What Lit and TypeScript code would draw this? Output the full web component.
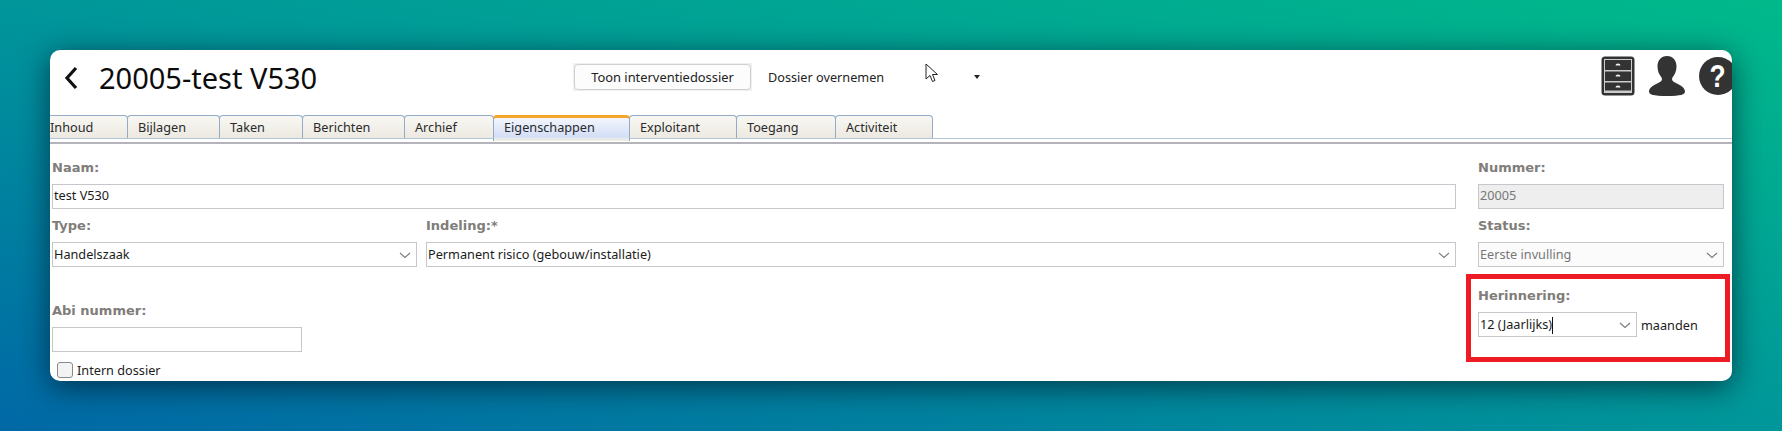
import { LitElement, html, css } from "lit";
import { customElement } from "lit/decorators.js";

const TABS = [
  { label: "Inhoud", width: 88, first: true },
  { label: "Bijlagen", width: 92 },
  { label: "Taken", width: 83 },
  { label: "Berichten", width: 102 },
  { label: "Archief", width: 89 },
  { label: "Eigenschappen", width: 136, active: true },
  { label: "Exploitant", width: 107 },
  { label: "Toegang", width: 99 },
  { label: "Activiteit", width: 97 },
];

const chevron = html`<svg class="chev" width="12" height="8" viewBox="0 0 12 8"><path d="M1 2l5 4.500 5-4.500" fill="none" stroke="#7a7a7a" stroke-width="1.100"/></svg>`;

@customElement("app-root")
export class AppRoot extends LitElement {
  static styles = css`
    :host {
      display: block;
      width: 1782px;
      height: 431px;
      padding: 50px;
      box-sizing: border-box;
      overflow: hidden;
      background: linear-gradient(to bottom left, #00b98a 0%, #00969a 50%, #0068a6 100%);
      font-family: "Noto Sans", Tahoma, sans-serif;
      font-size: 12.7px;
      color: #1c1c1c;
    }
    .card {
      position: relative;
      height: 331px;
      background: #fff;
      border-radius: 10px;
      box-shadow: 0 6px 30px rgba(0, 15, 35, 0.65);
      overflow: hidden;
    }
    .header {
      display: flex;
      height: 65px;
      align-items: flex-start;
      padding-left: 14px;
    }
    .back {
      margin-top: 14px;
      width: 509px;
      display: flex;
      align-items: center;
      gap: 21px;
    }
    .title {
      font-size: 29px;
      line-height: 28px;
      color: #0c0c0c;
      white-space: nowrap;
    }
    .btn-halo {
      margin-top: 13px;
      padding: 1px;
      background: #f0f0f0;
      display: flex;
    }
    .btn {
      width: 177px;
      height: 26px;
      box-sizing: border-box;
      background: #fcfcfc;
      border: 1px solid #d0d0d0;
      border-radius: 4px;
      display: flex;
      align-items: center;
      justify-content: center;
      font-size: 12.9px;
      color: #222;
    }
    .menu {
      margin-top: 13px;
      margin-left: 16px;
      height: 28px;
      width: 212px;
      display: flex;
      align-items: center;
      justify-content: space-between;
      color: #222;
    }
    .caret {
      width: 0;
      height: 0;
      border-left: 3px solid transparent;
      border-right: 3px solid transparent;
      border-top: 4px solid #222;
    }
    .icons {
      margin-left: auto;
      margin-top: 6px;
      display: flex;
      align-items: center;
      gap: 14px;
      margin-right: -5px;
    }
    .cursor {
      position: absolute;
      left: 875px;
      top: 13px;
    }
    .tabs {
      display: flex;
      height: 23px;
      margin-left: -11px;
      align-items: stretch;
    }
    .tab {
      box-sizing: border-box;
      padding: 2px 0 0 10px;
      border: 1px solid #93abc5;
      border-bottom: none;
      margin-right: -1px;
      border-radius: 4px 4px 0 0;
      background: linear-gradient(#f8f7f3, #ece9e1);
      line-height: 18px;
      color: #2a2a2a;
    }
    .tab.active {
      border-top: 3px solid #f5a42c;
      padding-top: 0;
      height: 26px;
      background: linear-gradient(#f3f6fd, #d4dff6 80%, #f4f2e2);
      position: relative;
      z-index: 1;
    }
    .rule {
      height: 6px;
      box-sizing: border-box;
      border-top: 1px solid #b3c5d8;
      border-bottom: 2px solid #b4b4ba;
    }
    .form {
      display: flex;
      padding: 14px 8px 0 2px;
      gap: 22px;
    }
    .left {
      flex: 1;
      min-width: 0;
    }
    .right {
      width: 246px;
    }
    .label {
      height: 19px;
      line-height: 19px;
      margin-bottom: 7px;
      font-family: "DejaVu Sans", sans-serif;
      font-weight: 700;
      font-size: 13px;
      color: #807d7a;
      white-space: nowrap;
    }
    .field {
      height: 25px;
      box-sizing: border-box;
      border: 1.5px solid #c6c6cc;
      background: #fff;
      padding: 0 1px;
      line-height: 21px;
      white-space: nowrap;
      margin-bottom: 7px;
    }
    .field.disabled {
      background: #eeeeee;
      color: #777;
    }
    .select {
      display: flex;
      align-items: center;
      justify-content: space-between;
      padding-right: 5px;
    }
    .select.disabled {
      background: #fbfbfb;
      color: #777;
    }
    .cols {
      display: flex;
      gap: 9px;
    }
    .type {
      width: 365px;
      flex: none;
    }
    .indeling {
      flex: 1;
    }
    .abi {
      margin-top: 27px;
    }
    .abi .field {
      width: 250px;
      margin-bottom: 10px;
    }
    .check {
      display: flex;
      align-items: center;
      gap: 4px;
      margin-left: 5px;
      height: 16px;
      line-height: 16px;
    }
    .box {
      width: 16px;
      height: 16px;
      box-sizing: border-box;
      border: 1.5px solid #8a8a8a;
      border-radius: 3px;
      background: #f3f3f3;
    }
    .notice {
      box-sizing: border-box;
      margin: 1px -6px 0 -12px;
      height: 88px;
      border: 5px solid #ed1c24;
      padding: 7px 0 0 7px;
    }
    .row {
      display: flex;
      align-items: center;
      gap: 4px;
    }
    .row .field {
      width: 159px;
      margin: 0;
    }
    .caretbar {
      display: inline-block;
      width: 1px;
      height: 17px;
      background: #111;
      vertical-align: middle;
    }
  `;

  render() {
    return html`
      <div class="card">
        <div class="header">
          <div class="back">
            <svg width="14" height="24" viewBox="0 0 14 24"><path d="M12 2L3 12l9 10" fill="none" stroke="#111" stroke-width="3.200"/></svg>
            <div class="title">20005-test V530</div>
          </div>
          <div class="btn-halo"><div class="btn">Toon interventiedossier</div></div>
          <div class="menu"><span>Dossier overnemen</span><span class="caret"></span></div>
          <div class="icons">
            <svg width="34" height="40" viewBox="0 0 34 40">
              <rect x="0.5" y="0.5" width="33" height="39" rx="3.500" fill="#333"/>
              <rect x="3.500" y="3.500" width="27" height="33" fill="none" stroke="#ccc" stroke-width="1"/>
              <rect x="4" y="14" width="26" height="1.500" fill="#ccc"/>
              <rect x="4" y="25" width="26" height="1.500" fill="#ccc"/>
              <rect x="3" y="34.500" width="28" height="2" fill="#ccc"/>
              <path d="M14.500 9.500a2.500 2 0 015 0zM14.500 20.500a2.500 2 0 015 0zM14.500 31.500a2.500 2 0 015 0z" fill="#eee"/>
            </svg>
            <svg width="36" height="40" viewBox="0 0 36 40">
              <path d="M18 0c6 0 9.500 4.500 9.500 10.500 0 4-1.500 8-4 11-1 1.500-.5 3.500 1.500 4.500 5 2.500 11 5 11 9.500 0 3-4 4.500-18 4.500S0 38.500 0 35.500c0-4.500 6-7 11-9.500 2-1 2.500-3 1.500-4.500-2.500-3-4-7-4-11C8.500 4.500 12 0 18 0z" fill="#333"/>
            </svg>
            <svg width="38" height="38" viewBox="0 0 38 38">
              <circle cx="19" cy="19" r="19" fill="#333"/>
              <text transform="translate(18.500 30) scale(.85 1)" text-anchor="middle" font-family="Liberation Sans" font-weight="700" font-size="31" fill="#fff">?</text>
            </svg>
          </div>
        </div>
        <svg class="cursor" width="14" height="21" viewBox="0 0 14 21">
          <path d="M1 1v15l4-3.500 2.500 6 2.500-1-2.500-6h5z" fill="#fff" stroke="#222" stroke-width="1"/>
        </svg>
        <div class="tabs">
          ${TABS.map(
            (t) => html`<div class="tab ${t.active ? "active" : ""}" style="width:${t.width + 1}px">${t.label}</div>`
          )}
        </div>
        <div class="rule"></div>
        <div class="form">
          <div class="left">
            <div class="label">Naam:</div>
            <div class="field">test V530</div>
            <div class="cols">
              <div class="type">
                <div class="label">Type:</div>
                <div class="field select"><span>Handelszaak</span>${chevron}</div>
              </div>
              <div class="indeling">
                <div class="label">Indeling:*</div>
                <div class="field select"><span>Permanent risico (gebouw/installatie)</span>${chevron}</div>
              </div>
            </div>
            <div class="abi">
              <div class="label">Abi nummer:</div>
              <div class="field"></div>
              <div class="check"><span class="box"></span><span>Intern dossier</span></div>
            </div>
          </div>
          <div class="right">
            <div class="label">Nummer:</div>
            <div class="field disabled">20005</div>
            <div class="label">Status:</div>
            <div class="field select disabled"><span>Eerste invulling</span>${chevron}</div>
            <div class="notice">
              <div class="label">Herinnering:</div>
              <div class="row">
                <div class="field select"><span>12 (Jaarlijks)<span class="caretbar"></span></span>${chevron}</div>
                <span>maanden</span>
              </div>
            </div>
          </div>
        </div>
      </div>
    `;
  }
}
